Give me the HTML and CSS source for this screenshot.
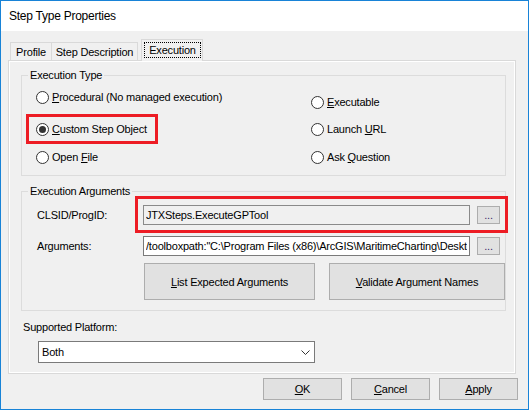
FILE: index.html
```html
<!DOCTYPE html>
<html lang="en">
<head>
  <meta charset="UTF-8" />
  <title>Step Type Properties</title>
  <link rel="stylesheet" href="styles.css">
</head>
<body>
  <div class="window">
    <div class="titlebar">Step Type Properties</div>

    <div class="tabs">
      <div class="tab tab-profile">Profile</div>
      <div class="tab tab-desc">Step Description</div>
      <div class="tab tab-active"><span class="focus">Execution</span></div>
    </div>

    <div class="panel">
      <div class="group group-type">
        <div class="group-title">Execution Type</div>
        <div class="radio-grid">
          <div class="radio-col col-left">
            <label class="radio"><span class="dot"></span><span><u>P</u>rocedural (No managed execution)</span></label>
            <label class="radio"><span class="dot checked"></span><span><u>C</u>ustom Step Object</span></label>
            <label class="radio"><span class="dot"></span><span>Open <u>F</u>ile</span></label>
          </div>
          <div class="radio-col col-right">
            <label class="radio"><span class="dot"></span><span><u>E</u>xecutable</span></label>
            <label class="radio"><span class="dot"></span><span>Launch <u>U</u>RL</span></label>
            <label class="radio"><span class="dot"></span><span>Ask <u>Q</u>uestion</span></label>
          </div>
        </div>
      </div>

      <div class="group group-args">
        <div class="group-title">Execution Arguments</div>
        <div class="field-row row-clsid">
          <span class="field-label">CLSID/ProgID:</span>
          <input class="field readonly" type="text" value="JTXSteps.ExecuteGPTool" readonly />
          <button class="browse">...</button>
        </div>
        <div class="field-row row-args">
          <span class="field-label">Arguments:</span>
          <input class="field" type="text" value='/toolboxpath:"C:\Program Files (x86)\ArcGIS\MaritimeCharting\Desktop10.6\Tools"' />
          <button class="browse">...</button>
        </div>
        <div class="arg-buttons">
          <button class="big-btn btn-list"><u>L</u>ist Expected Arguments</button>
          <button class="big-btn btn-validate"><u>V</u>alidate Argument Names</button>
        </div>
      </div>

      <div class="platform-label">Supported Platform:</div>
      <div class="select">
        <span>Both</span>
        <svg width="9" height="5" viewBox="0 0 9 5"><polyline points="0.5,0.5 4.5,4.5 8.5,0.5" fill="none" stroke="#333" stroke-width="1"/></svg>
      </div>

      <!-- red highlight frames -->
      <div class="callout callout-radio"></div>
      <div class="callout callout-clsid"></div>
    </div>

    <div class="actions">
      <button class="btn"><u>O</u>K</button>
      <button class="btn"><u>C</u>ancel</button>
      <button class="btn"><u>A</u>pply</button>
    </div>
  </div>
</body>
</html>
```

FILE: styles.css
```css
body {
  margin: 0;
  font-family: "Liberation Sans", Arial, sans-serif;
  font-size: 11px;
  letter-spacing: -0.2px;
  color: #000;
}

.window {
  width: 529px;
  height: 410px;
  box-sizing: border-box;
  border: 1px solid #1883d7;
  background-color: #f0f0f0;
}

.titlebar {
  height: 30px;
  display: flex;
  align-items: center;
  padding-left: 8px;
  background-color: #fff;
  font-size: 12px;
  letter-spacing: -0.25px;
}

/* tab strip */
.tabs {
  display: flex;
  align-items: flex-end;
  height: 21px;
  margin-top: 8px;
  padding-left: 9px;
}

.tab {
  height: 18px;
  box-sizing: border-box;
  border: 1px solid #d9d9d9;
  border-bottom: none;
  text-align: center;
  white-space: nowrap;
  line-height: 13px;
  padding-top: 3px;
}

.tab-profile {
  width: 42px;
}

.tab-desc {
  width: 87px;
  margin-left: -1px;
}

.tab-active {
  width: 62px;
  height: 22px;
  margin-left: 3px;
  margin-bottom: -1px;
  padding-top: 2px;
  background-color: #f0f0f0;
  position: relative;
  z-index: 1;
}

.focus {
  display: block;
  margin: 0 1px 0 2px;
  height: 16px;
  line-height: 14px;
  box-sizing: border-box;
  border: 1px dotted #000;
}

/* tab page */
.panel {
  position: relative;
  width: 508px;
  height: 314px;
  margin-left: 7px;
  box-sizing: border-box;
  border: 1px solid #d9d9d9;
  box-shadow: inset 0 0 0 1px #fff;
  overflow: hidden;
}

.group {
  width: 485px;
  margin-left: 12px;
  box-sizing: border-box;
  border: 1px solid #dcdcdc;
}

.group-type {
  margin-top: 14px;
}

.group-args {
  margin-top: 15px;
  padding-bottom: 10px;
}

.group-title {
  width: fit-content;
  margin: -7px 0 0 6px;
  padding: 0 2px;
  line-height: 13px;
  background-color: #f0f0f0;
}

.radio-grid {
  display: grid;
  grid-template-columns: 275px 1fr;
  padding: 0 0 10px 14px;
}

.radio {
  display: flex;
  align-items: center;
  gap: 3px;
  height: 16px;
}

.dot {
  width: 13px;
  height: 13px;
  box-sizing: border-box;
  border: 1px solid #333;
  border-radius: 50%;
  background-color: #fff;
  display: flex;
  align-items: center;
  justify-content: center;
}

.dot.checked::after {
  content: "";
  width: 7px;
  height: 7px;
  border-radius: 50%;
  background-color: #333;
}

.col-left .radio:nth-child(1) { margin-top: 7px; }
.col-left .radio:nth-child(2) { margin-top: 16px; }
.col-left .radio:nth-child(3) { margin-top: 12px; }

.col-right .radio:nth-child(1) { margin-top: 12px; }
.col-right .radio:nth-child(2) { margin-top: 11px; }
.col-right .radio:nth-child(3) { margin-top: 12px; }

/* argument fields */
.field-row {
  display: flex;
  align-items: center;
  padding-left: 15px;
  height: 20px;
}

.row-clsid {
  margin-top: 7px;
}

.row-args {
  margin-top: 11px;
}

.field-label {
  width: 106px;
}

.field {
  width: 327px;
  height: 20px;
  box-sizing: border-box;
  margin: 0;
  padding: 0 2px;
  border: 1px solid #7a7a7a;
  border-radius: 0;
  background-color: #fff;
  font: inherit;
  letter-spacing: inherit;
  color: #000;
  outline: none;
}

.field.readonly {
  background-color: #f0f0f0;
  border-color: #8a8a8a;
}

button {
  font: inherit;
  letter-spacing: inherit;
  color: #000;
  margin: 0;
  padding: 0;
  border: 1px solid #adadad;
  border-radius: 0;
  background-color: #e1e1e1;
  box-sizing: border-box;
}

.browse {
  width: 23px;
  height: 18px;
  margin-left: 7px;
  line-height: 12px;
  color: #3c2a6b;
}

.arg-buttons {
  display: flex;
  gap: 14px;
  margin-top: 7px;
  padding-left: 122px;
}

.big-btn {
  height: 37px;
}

.btn-list {
  width: 171px;
}

.btn-validate {
  width: 176px;
}

.platform-label {
  margin: 10px 0 0 14px;
  line-height: 13px;
}

.select {
  width: 277px;
  height: 22px;
  margin: 7px 0 0 29px;
  box-sizing: border-box;
  border: 1px solid #7a7a7a;
  background-color: #fff;
  display: flex;
  align-items: center;
  justify-content: space-between;
  padding: 0 4px 0 3px;
}

.callout {
  position: absolute;
  box-sizing: border-box;
  border: 3px solid #ed1c24;
}

.callout-radio {
  left: 17px;
  top: 53px;
  width: 132px;
  height: 30px;
}

.callout-clsid {
  left: 126px;
  top: 135px;
  width: 373px;
  height: 37px;
}

/* dialog buttons */
.actions {
  display: flex;
  justify-content: flex-end;
  gap: 9px;
  margin-top: 4px;
  padding-right: 10px;
}

.btn {
  width: 79px;
  height: 22px;
}
```
